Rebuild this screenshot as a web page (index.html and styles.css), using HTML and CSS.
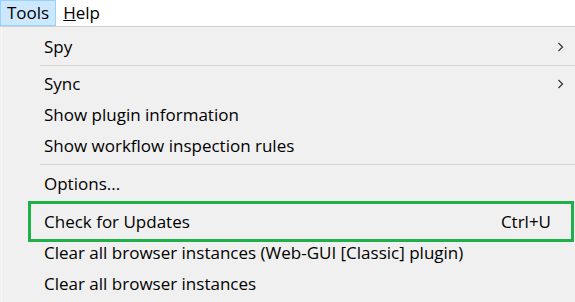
FILE: index.html
```html
<!DOCTYPE html>
<html>
<head>
<meta charset="utf-8">
<link rel="stylesheet" href="styles.css">
</head>
<body>
<div class="menubar">
  <div class="mb-item active">Tools</div>
  <div class="mb-item"><u>H</u>elp</div>
</div>
<div class="menu">
  <div class="row"><span class="label">Spy</span><span class="arrow"><svg width="8" height="10" viewBox="0 0 8 10"><path d="M1.5 1 L5.5 5 L1.5 9" fill="none" stroke="#333" stroke-width="1.2"/></svg></span></div>
  <div class="sep"></div>
  <div class="row"><span class="label">Sync</span><span class="arrow"><svg width="8" height="10" viewBox="0 0 8 10"><path d="M1.5 1 L5.5 5 L1.5 9" fill="none" stroke="#333" stroke-width="1.2"/></svg></span></div>
  <div class="row"><span class="label">Show plugin information</span></div>
  <div class="row"><span class="label">Show workflow inspection rules</span></div>
  <div class="sep wide"></div>
  <div class="row"><span class="label">Options...</span></div>
  <div class="sep wide"></div>
  <div class="row highlight"><span class="label">Check for Updates</span><span class="shortcut">Ctrl+U</span></div>
  <div class="row"><span class="label">Clear all browser instances (Web-GUI [Classic] plugin)</span></div>
  <div class="row"><span class="label">Clear all browser instances</span></div>
</div>
```

FILE: styles.css
```css
html, body {
  margin: 0;
  padding: 0;
  background: #f0f0f0;
  font-family: "Open Sans", "Noto Sans", sans-serif;
  font-size: 17px;
  color: #000;
  width: 575px;
  height: 302px;
  overflow: hidden;
}
.menubar {
  display: flex;
  height: 26px;
  background: #fff;
  border-bottom: 1px solid #cfcfcf;
}
.mb-item {
  padding: 0 4px 0 6px;
  line-height: 24px;
  font-size: 17px;
  box-sizing: border-box;
  height: 26px;
  border: 1px solid transparent;
}
.mb-item.active {
  background: #cce8ff;
  border: 1px solid #99d1ff;
  padding: 0 6px 0 6px;
}
.menu {
  height: 273px;
  margin-left: 1px;
  border-left: 1px solid #f7f7f7;
  border-bottom: 2px solid #8a8a8a;
  background: #f0f0f0;
  padding-top: 4px;
  box-sizing: content-box;
}
.row {
  position: relative;
  display: flex;
  align-items: center;
  height: 31px;
  padding-left: 42px;
  padding-right: 24px;
  font-size: 17px;
}
.label { flex: 1; white-space: nowrap; }
.arrow { display: flex; align-items: center; margin-right: -14px; }
.sep {
  height: 6px;
  margin-left: 38px;
  display: flex;
  align-items: center;
}
.sep.wide { height: 7px; }
.sep::after {
  content: "";
  display: block;
  width: 100%;
  height: 1px;
  background: #d7d7d7;
}
.highlight::before {
  content: "";
  position: absolute;
  left: 26px;
  right: 1px;
  top: -5px;
  bottom: -5px;
  border: 3px solid #1fb04a;
  pointer-events: none;
}
```
